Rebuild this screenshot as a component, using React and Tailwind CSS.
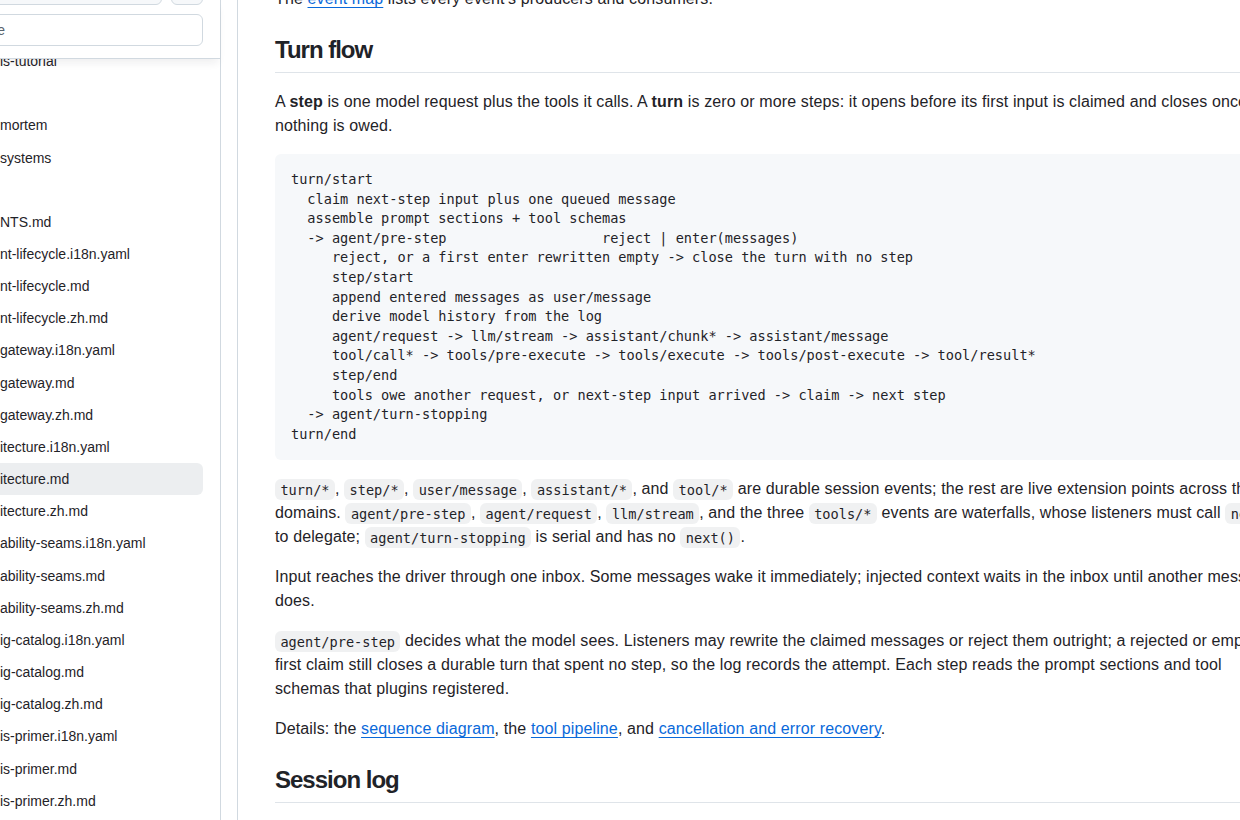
const mono = "font-['DejaVu_Sans_Mono','Liberation_Mono',monospace]";

const tree = [
    { name: 'is-tutorial', file: true },
    { name: 'incidents', file: false },
    { name: 'mortem', file: true },
    { name: 'systems', file: true },
    { name: 'design', file: false },
    { name: 'NTS.md', file: true },
    { name: 'nt-lifecycle.i18n.yaml', file: true },
    { name: 'nt-lifecycle.md', file: true },
    { name: 'nt-lifecycle.zh.md', file: true },
    { name: 'gateway.i18n.yaml', file: true },
    { name: 'gateway.md', file: true },
    { name: 'gateway.zh.md', file: true },
    { name: 'itecture.i18n.yaml', file: true },
    { name: 'itecture.md', file: true, current: true },
    { name: 'itecture.zh.md', file: true },
    { name: 'ability-seams.i18n.yaml', file: true },
    { name: 'ability-seams.md', file: true },
    { name: 'ability-seams.zh.md', file: true },
    { name: 'ig-catalog.i18n.yaml', file: true },
    { name: 'ig-catalog.md', file: true },
    { name: 'ig-catalog.zh.md', file: true },
    { name: 'is-primer.i18n.yaml', file: true },
    { name: 'is-primer.md', file: true },
    { name: 'is-primer.zh.md', file: true },
];

const turnFlow = `turn/start
  claim next-step input plus one queued message
  assemble prompt sections + tool schemas
  -> agent/pre-step                   reject | enter(messages)
     reject, or a first enter rewritten empty -> close the turn with no step
     step/start
     append entered messages as user/message
     derive model history from the log
     agent/request -> llm/stream -> assistant/chunk* -> assistant/message
     tool/call* -> tools/pre-execute -> tools/execute -> tools/post-execute -> tool/result*
     step/end
     tools owe another request, or next-step input arrived -> claim -> next step
  -> agent/turn-stopping
turn/end`;

function Code({ children }) {
    return (
        <code className={`${mono} rounded-md bg-[#818b981f] px-[0.4em] py-[0.2em] text-[85%] tracking-normal`}>
            {children}
        </code>
    );
}

function A({ children }) {
    return (
        <a href="#" className="text-[#0969da] underline underline-offset-[3px]">
            {children}
        </a>
    );
}

function Sidebar() {
    return (
        <aside className="-ml-[80px] flex w-[301px] shrink-0 flex-col border-r border-[#d1d9e0]">
            <div className="relative z-10 border-b border-[#d1d9e0] bg-white pr-[17px] pb-[12px] pl-4 shadow-[0_6px_8px_-2px_rgba(31,35,40,0.07)]">
                <div className="-mt-[27px] flex gap-[9px]">
                    <div className="h-8 flex-1 rounded-md border border-[#d1d9e0] bg-[#f6f8fa]" />
                    <div className="h-8 w-8 rounded-md border border-[#d1d9e0] bg-[#f6f8fa]" />
                </div>
                <div className="mt-[9px] flex h-8 items-center rounded-md border border-[#d1d9e0] bg-white pl-[12px] text-sm text-[#59636e]">
                    Go to file
                </div>
            </div>
            <ul className="-mt-[14px] pr-[17px] pl-2 text-sm">
                {tree.map((item) => (
                    <li
                        key={item.name}
                        className={
                            'flex h-[32.17px] items-center whitespace-nowrap rounded-md ' +
                            (item.file ? 'pl-[72px] ' : 'pl-2 ') +
                            (item.current ? 'bg-[#818b9826]' : '')
                        }
                    >
                        {item.name}
                    </li>
                ))}
            </ul>
        </aside>
    );
}

export default function App() {
    return (
        <div className="flex h-[820px] w-[1240px] overflow-hidden bg-white font-['Liberation_Sans',Arial,sans-serif] text-[#1f2328]">
            <Sidebar />
            <main className="ml-4 shrink-0 border-l border-[#d1d9e0] pl-[37px]">
                <article className="-mt-[13px] w-[1014px] text-base leading-6 tracking-[0.12px]">
                    <p className="mb-4">
                        The <A>event map</A> lists every event’s producers and consumers.
                    </p>

                    <h2 className="mt-6 mb-4 border-b border-[#d1d9e0b3] pb-[7px] text-2xl leading-[1.25] font-bold tracking-[-1px]">
                        Turn flow
                    </h2>
                    <p className="mb-4 pt-px">
                        A <strong>step</strong> is one model request plus the tools it calls. A <strong>turn</strong> is
                        zero or more steps: it opens before its first input is claimed and closes once nothing is owed.
                    </p>
                    <pre className={`${mono} mb-4 overflow-hidden rounded-md bg-[#f6f8fa] p-4 text-[13.6px] leading-[19.6px] tracking-normal`}>
                        {turnFlow}
                    </pre>
                    <p className="mb-4 pt-px">
                        <Code>turn/*</Code>, <Code>step/*</Code>, <Code>user/message</Code>, <Code>assistant/*</Code>, and{' '}
                        <Code>tool/*</Code> are durable session events; the rest are live extension points across the
                        domains. <Code>agent/pre-step</Code>, <Code>agent/request</Code>, <Code>llm/stream</Code>, and the
                        three <Code>tools/*</Code> events are waterfalls, whose listeners must call <Code>next()</Code> to
                        delegate; <Code>agent/turn-stopping</Code> is serial and has no <Code>next()</Code>.
                    </p>
                    <p className="mb-4">
                        Input reaches the driver through one inbox. Some messages wake it immediately; injected context
                        waits in the inbox until another message does.
                    </p>
                    <p className="mb-4">
                        <Code>agent/pre-step</Code> decides what the model sees. Listeners may rewrite the claimed messages
                        or reject them outright; a rejected or empty first{'\u00a0'}claim still closes a durable turn that
                        spent no step, so the log records the attempt. Each step reads the prompt sections and tool
                        schemas{'\u00a0'}that plugins registered.
                    </p>
                    <p className="mb-4">
                        Details: the <A>sequence diagram</A>, the <A>tool pipeline</A>, and{' '}
                        <A>cancellation and error recovery</A>.
                    </p>

                    <h2 className="mt-6 mb-4 border-b border-[#d1d9e0b3] pb-[7px] text-2xl leading-[1.25] font-bold tracking-[-1px]">
                        Session log
                    </h2>
                    <p className="mb-4">
                        Every durable event is appended to the session log before its listeners run.
                    </p>
                </article>
            </main>
        </div>
    );
}
